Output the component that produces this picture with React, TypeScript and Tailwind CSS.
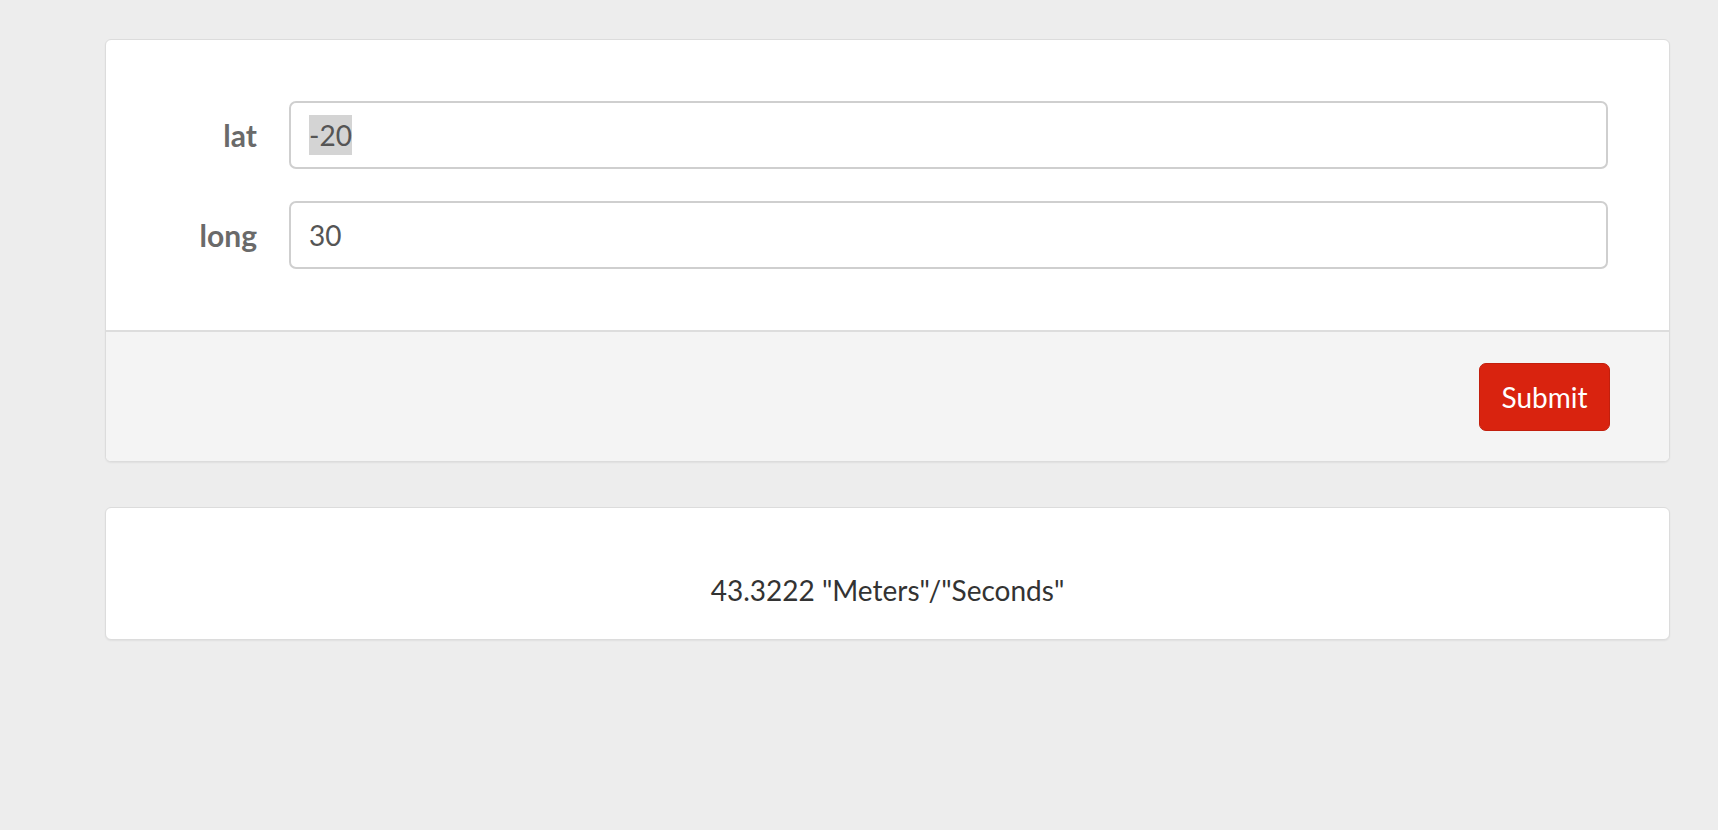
export default function App() {
    return (
        <div className="min-h-[830px] bg-[#ededed] pl-[105px] pr-[48px] pt-[39px] font-['Lato','Open_Sans',sans-serif]">
            {/* Form card */}
            <div className="bg-white border border-[#dcdcdc] rounded-[6px] overflow-hidden shadow-[0_1px_2px_rgba(0,0,0,0.06)]">
                <div className="px-[61px] pt-[61px] pb-[61px] flex flex-col gap-[32px]">
                    <div className="flex items-center gap-[32px]">
                        <label className="w-[90px] text-right text-[30px] font-bold text-[#6a6a6a]">lat</label>
                        <div className="flex-1 h-[68px] border-2 border-[#cfcfcf] rounded-[7px] px-[18px] flex items-center text-[28px] text-[#555]">
                            <span className="bg-[#d4d4d4] leading-[40px]">-20</span>
                        </div>
                    </div>
                    <div className="flex items-center gap-[32px]">
                        <label className="w-[90px] text-right text-[30px] font-bold text-[#6a6a6a]">long</label>
                        <div className="flex-1 h-[68px] border-2 border-[#cfcfcf] rounded-[7px] px-[18px] flex items-center text-[28px] text-[#555]">
                            <span className="leading-[40px]">30</span>
                        </div>
                    </div>
                </div>
                <div className="bg-[#f4f4f4] border-t-2 border-[#dddddd] px-[59px] pt-[31px] pb-[30px] flex justify-end">
                    <button className="w-[131px] h-[68px] bg-[#d9230f] border border-[#c21f0d] rounded-[7px] text-white text-[28px]">
                        Submit
                    </button>
                </div>
            </div>

            {/* Result card */}
            <div className="mt-[45px] bg-white border border-[#dcdcdc] rounded-[6px] shadow-[0_1px_2px_rgba(0,0,0,0.06)] pt-[62px] pb-[29px] text-center text-[28px] leading-[40px] text-[#333]">
                43.3222 "Meters"/"Seconds"
            </div>
        </div>
    );
}
